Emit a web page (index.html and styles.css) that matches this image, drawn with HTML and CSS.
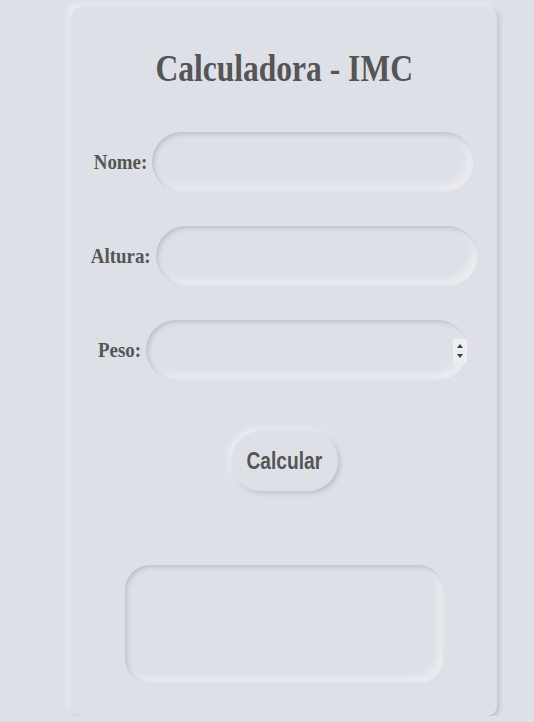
FILE: index.html
```html
<!DOCTYPE html>
<html lang="pt">
<head>
<meta charset="utf-8">
<title>Calculadora - IMC</title>
<link rel="stylesheet" href="styles.css">
</head>
<body>
<main class="card">
  <h1 class="title"><span class="squeeze">Calculadora - IMC</span></h1>
  <form class="form">
    <div class="row">
      <label class="label" for="nome">Nome:</label>
      <input class="field" id="nome" type="text">
    </div>
    <div class="row">
      <label class="label" for="altura">Altura:</label>
      <input class="field" id="altura" type="text">
    </div>
    <div class="row">
      <label class="label" for="peso">Peso:</label>
      <span class="number">
        <input class="field" id="peso" type="text">
        <span class="spin" aria-hidden="true">
          <svg width="14" height="24" viewBox="0 0 14 24">
            <rect width="14" height="24" fill="#eceef1"/>
            <polygon points="4,9 10,9 7,5" fill="#3f3f3f"/>
            <line x1="2" y1="12" x2="12" y2="12" stroke="#e2e4e8" stroke-width="1"/>
            <polygon points="4,15 10,15 7,19" fill="#3f3f3f"/>
          </svg>
        </span>
      </span>
    </div>
    <button class="btn" type="button"><span class="btn-text">Calcular</span></button>
  </form>
  <div class="result"></div>
</main>
</body>
</html>
```
FILE: styles.css
```css
html, body {
  margin: 0;
  background: #dde1e7;
}

body {
  padding: 7px 0 0 71px;
}

.card {
  width: 426px;
  box-sizing: border-box;
  padding: 39px 0 33px;
  background: #dde1e7;
  border-radius: 10px;
  box-shadow: -3px -3px 7px rgba(255, 255, 255, 0.45), 2px 2px 5px rgba(94, 104, 121, 0.29);
  display: flex;
  flex-direction: column;
  align-items: center;
}

.title {
  margin: 0;
  font-family: "Liberation Serif", "Times New Roman", serif;
  font-weight: bold;
  font-size: 38px;
  line-height: 44px;
  color: #555;
  text-align: center;
}

.squeeze {
  display: inline-block;
  transform: scaleX(0.83);
}

.form {
  margin-top: 42px;
  display: flex;
  flex-direction: column;
  align-items: center;
  gap: 34px;
  width: 100%;
}

.row {
  display: flex;
  align-items: center;
  justify-content: center;
  gap: 5px;
  height: 60px;
}

.label {
  display: inline-block;
  font-family: "Liberation Serif", "Times New Roman", serif;
  font-weight: bold;
  font-size: 22px;
  color: #555;
  transform: scaleX(0.86);
  transform-origin: right center;
  margin-left: -9px;
}

.field {
  width: 322px;
  height: 60px;
  box-sizing: border-box;
  border: none;
  outline: none;
  border-radius: 30px;
  background: #dde1e7;
  padding: 0 20px;
  font-size: 18px;
  color: #555;
  box-shadow: inset 2px 2px 5px #babecc, inset -5px -5px 10px rgba(255, 255, 255, 0.45);
  display: block;
}

.number {
  position: relative;
  display: block;
}

.spin {
  position: absolute;
  right: 1px;
  top: 19px;
  width: 14px;
  height: 24px;
  display: block;
}

.spin svg {
  display: block;
}

.btn {
  margin-top: 17px;
  width: 107px;
  height: 60px;
  border: none;
  outline: none;
  border-radius: 30px;
  background: #dde1e7;
  box-shadow: -3px -3px 7px rgba(255, 255, 255, 0.45), 2px 2px 5px rgba(94, 104, 121, 0.29);
  font-family: "Liberation Sans", Arial, sans-serif;
  font-weight: bold;
  font-size: 24px;
  color: #555;
  padding: 0;
  cursor: pointer;
}

.btn-text {
  display: inline-block;
  transform: scaleX(0.8);
}

.result {
  margin-top: 74px;
  width: 319px;
  height: 118px;
  border-radius: 25px;
  background: #dde1e7;
  box-shadow: inset 2px 2px 5px #babecc, inset -5px -5px 10px rgba(255, 255, 255, 0.45);
}
```
